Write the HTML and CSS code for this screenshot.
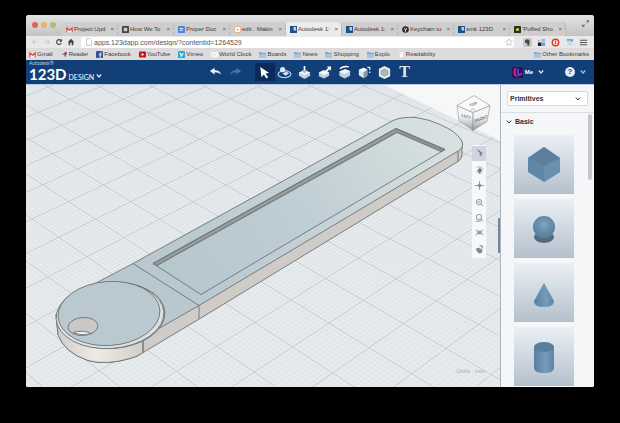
FILE: index.html
```html
<!DOCTYPE html>
<html lang="en">
<head>
<meta charset="utf-8">
<title>Autodesk 123D Design</title>
<link rel="stylesheet" href="styles.css">
</head>
<body>
<div class="window">
  <nav class="tabs" aria-label="Tabs">
    <div class="lights"><i class="light red"></i><i class="light amber"></i><i class="light green"></i></div>
    <button class="tab"><svg class="fav" viewBox="0 0 8 8"><path d="M1 7V2l3 3 3-3v5" fill="#fff" stroke="#d8473b" stroke-width="1.3"/></svg><span>Project Upd</span><b>×</b></button>
    <button class="tab"><svg class="fav" viewBox="0 0 8 8"><rect width="8" height="8" rx="1" fill="#444"/><rect x="2" y="2" width="4" height="4" fill="#ccc"/></svg><span>How We To</span><b>×</b></button>
    <button class="tab"><svg class="fav" viewBox="0 0 8 8"><rect width="8" height="8" rx="1" fill="#4a86e8"/><path d="M2 3h4M2 5h3" stroke="#fff"/></svg><span>Proper Doc</span><b>×</b></button>
    <button class="tab"><svg class="fav" viewBox="0 0 8 8"><rect x=".5" y=".5" width="7" height="7" rx="2" fill="#fff" stroke="#f0a070"/><circle cx="4" cy="4" r="1.5" fill="#f5c09a"/></svg><span>edit : Makin</span><b>×</b></button>
    <button class="tab active"><svg class="fav" viewBox="0 0 8 8"><rect width="8" height="8" fill="#1f4f87"/><path d="M4 1h3v4H4z" fill="#b9d4ec"/></svg><span>Autodesk 1:</span><b>×</b></button>
    <button class="tab"><svg class="fav" viewBox="0 0 8 8"><rect width="8" height="8" fill="#1f4f87"/><path d="M4 1h3v4H4z" fill="#b9d4ec"/></svg><span>Autodesk 1:</span><b>×</b></button>
    <button class="tab"><svg class="fav" viewBox="0 0 8 8"><circle cx="4" cy="4" r="3.8" fill="#2b2b2b"/><path d="M2.5 2.5L4 4.5l1.500-2M4 4v2.500" stroke="#fff" fill="none"/></svg><span>Keychain tu</span><b>×</b></button>
    <button class="tab"><svg class="fav" viewBox="0 0 8 8"><rect width="8" height="8" fill="#1f4f87"/><path d="M4 1h3v4H4z" fill="#b9d4ec"/></svg><span>smk 123D</span><b>×</b></button>
    <button class="tab"><svg class="fav" viewBox="0 0 8 8"><rect width="8" height="8" rx="1" fill="#2c3310"/><circle cx="4" cy="4" r="1.800" fill="#c9d35c"/></svg><span>'Puffed Sho</span><b>×</b></button>
    <svg class="expand" viewBox="0 0 8 8"><path d="M5 .5h2.500V3M7 1L4.800 3.200M3 7.500H.5V5M1 7l2.200-2.200" stroke="#666" fill="none"/></svg>
  </nav>

  <div class="address">
    <svg class="nav-ico" viewBox="0 0 10 10"><path d="M9 5H2M5 2L2 5l3 3" stroke="#cdcdcd" stroke-width="1.500" fill="none"/></svg>
    <svg class="nav-ico" viewBox="0 0 10 10"><path d="M1 5h7M5 2l3 3-3 3" stroke="#cdcdcd" stroke-width="1.500" fill="none"/></svg>
    <svg class="nav-ico" viewBox="0 0 10 10"><path d="M7.800 6.200A3 3 0 1 1 7.300 3" stroke="#444" stroke-width="1.400" fill="none"/><path d="M8.800 1v3.600H5.200z" fill="#444"/></svg>
    <svg class="nav-ico" viewBox="0 0 10 10"><path d="M5 1l4 4H8v4H6V6H4v3H2V5H1z" fill="#444"/></svg>
    <div class="urlbox">
      <svg class="page" viewBox="0 0 8 8"><path d="M1.500.5h3.500l1.500 1.500v5.500h-5z" fill="#fff" stroke="#ccc"/></svg>
      <input class="url" aria-label="Address" value="apps.123dapp.com/design/?contentid=1264529">
      <svg class="page" viewBox="0 0 8 8"><path d="M4 .6l1 2.300 2.500.2-1.900 1.700.6 2.500L4 6 1.800 7.300l.6-2.500L.5 3.100 3 2.900z" fill="#fff" stroke="#bbb" stroke-width=".7"/></svg>
    </div>
    <svg class="ext" viewBox="0 0 10 10"><rect width="10" height="10" rx="1" fill="#c9c9c9"/><path d="M2 3l2-1.500 3 .5.500 3-1 3.500-2-.5.500-2-2.500-.5z" fill="#454a45"/></svg>
    <svg class="ext" viewBox="0 0 10 10"><path d="M1 5h4v4H1z" fill="#222"/><path d="M5 5h4v4H5z" fill="#6d9fd0"/><path d="M5 1h4v3H5z" fill="#8fb8df"/><path d="M1 2l2 2" stroke="#777"/></svg>
    <svg class="ext" viewBox="0 0 10 10"><circle cx="5" cy="5" r="3.600" fill="#f6dcd8" stroke="#d4402f" stroke-width="1.500"/><path d="M5 3v4" stroke="#d4402f"/></svg>
    <svg class="ext" viewBox="0 0 10 10"><path d="M2 2h6v6H3z" fill="#bcdcf0"/><path d="M2 2h6v2" stroke="#4f94c9" stroke-width="1.500" fill="none"/></svg>
    <svg class="ext" viewBox="0 0 10 10"><path d="M1 2.500h8M1 5h8M1 7.500h8" stroke="#555" stroke-width="1.300"/></svg>
  </div>

  <nav class="bookmarks" aria-label="Bookmarks">
    <a href="#"><svg class="bm" viewBox="0 0 8 8"><path d="M1 7V2l3 3 3-3v5" fill="#fff" stroke="#d8473b" stroke-width="1.300"/></svg>Gmail</a>
    <a href="#"><svg class="bm" viewBox="0 0 8 8"><path d="M0 4l7-3-2 6-1.500-3z" fill="#3d63b4"/><path d="M4 1l3 0-2 6z" fill="#c43d4d"/></svg>Reader</a>
    <a href="#"><svg class="bm" viewBox="0 0 8 8"><rect width="8" height="8" rx="1" fill="#2f55a0"/><path d="M6.500 2H5.500Q4.700 2 4.700 3v5M3.300 4.300h2.900" stroke="#fff" fill="none"/></svg>Facebook</a>
    <a href="#"><svg class="bm" viewBox="0 0 8 8"><rect y=".5" width="8" height="7" rx="1" fill="#c8161d"/><path d="M3 2.300v3.400L6 4z" fill="#fff"/></svg>YouTube</a>
    <a href="#"><svg class="bm" viewBox="0 0 8 8"><rect width="8" height="8" rx="1" fill="#27a9d8"/><path d="M1.800 2.500h1l.9 3.500L6 2.500" stroke="#fff" stroke-width="1.200" fill="none"/></svg>Vimeo</a>
    <a href="#"><svg class="bm" viewBox="0 0 8 8"><rect y="1" width="8" height="6" rx="1" fill="#faf7f5"/><path d="M1 5l2-2M4 5l2-2" stroke="#d5b6ae" stroke-width=".7"/></svg>World Clock</a>
    <a href="#"><svg class="bm" viewBox="0 0 8 8"><path d="M0 1h3l1 1h4v5.500H0z" fill="#7fabd0"/><path d="M0 3.500h8v4H0z" fill="#a4c6e2"/></svg>Boards</a>
    <a href="#"><svg class="bm" viewBox="0 0 8 8"><path d="M0 1h3l1 1h4v5.500H0z" fill="#7fabd0"/><path d="M0 3.500h8v4H0z" fill="#a4c6e2"/></svg>News</a>
    <a href="#"><svg class="bm" viewBox="0 0 8 8"><path d="M0 1h3l1 1h4v5.500H0z" fill="#7fabd0"/><path d="M0 3.500h8v4H0z" fill="#a4c6e2"/></svg>Shopping</a>
    <a href="#"><svg class="bm" viewBox="0 0 8 8"><path d="M0 1h3l1 1h4v5.500H0z" fill="#7fabd0"/><path d="M0 3.500h8v4H0z" fill="#a4c6e2"/></svg>Explo</a>
    <a href="#"><svg class="bm" viewBox="0 0 8 8"><path d="M1.500.5h3.500l1.500 1.500v5.500h-5z" fill="#fff" stroke="#d5d0d0" stroke-width=".6"/></svg>Readability</a>
    <a href="#" class="other"><svg class="bm" viewBox="0 0 8 8"><path d="M0 1h3l1 1h4v5.500H0z" fill="#7fabd0"/><path d="M0 3.500h8v4H0z" fill="#a4c6e2"/></svg>Other Bookmarks</a>
  </nav>

  <header class="header">
    <div class="brand">
      <div class="logo"><small>Autodesk®</small><strong>123D</strong></div>
      <span class="product">DESIGN</span>
      <svg class="chev" viewBox="0 0 6 6"><path d="M.8 1.500L3 4l2.200-2.500" stroke="#e4edf7" stroke-width="1.200" fill="none"/></svg>
    </div>
    <div class="tools">
      <button class="tool" aria-label="Undo"><svg viewBox="0 0 16 16"><path d="M2 6.500L7 3v2.200q6 .3 7 4.800-3-2.300-7-2.200V10z" fill="#e8f1fa"/></svg></button>
      <button class="tool" aria-label="Redo" disabled><svg viewBox="0 0 16 16"><path d="M14 6.500L9 3v2.200q-6 .3-7 4.800 3-2.300 7-2.200V10z" fill="#4672a5"/></svg></button>
      <span class="split"></span>
      <button class="tool on" aria-label="Select"><svg viewBox="0 0 16 16"><path d="M3.500 2l9.500 6.500-4 .5 3 4-2 1.300-2.700-4.200L4.800 13z" fill="#fff"/></svg></button>
      <button class="tool" aria-label="Primitives"><svg viewBox="0 0 16 16"><ellipse cx="8" cy="9.800" rx="6.800" ry="3.700" fill="none" stroke="#a9cbe8" stroke-width="1.300"/><circle cx="6" cy="5" r="2.800" fill="#d7e8f5"/><path d="M6 9l4-2 3 2-4 2.500z" fill="#d0e2f0"/></svg></button>
      <button class="tool" aria-label="Sketch"><svg viewBox="0 0 16 16"><path d="M2 8l6-2.500L14 8v3.500L8 15l-6-3.500z" fill="#c3d0dc"/><path d="M2 8l6-2.500L14 8l-6 3z" fill="#f4f7fa"/><path d="M8 1v6" stroke="#fff" stroke-width="1.800"/><path d="M5 5.500h6L8 9z" fill="#9fb4c8"/></svg></button>
      <button class="tool" aria-label="Construct"><svg viewBox="0 0 16 16"><path d="M2 8l5-2.500L13 8v3.500L7.500 14.500 2 12z" fill="#c3d0dc"/><path d="M2 8l5-2.500L13 8l-5.500 3z" fill="#f4f7fa"/><path d="M8 8.500L13 3.500" stroke="#fff" stroke-width="2"/><path d="M10.500 1.500h4.500V6z" fill="#fff"/></svg></button>
      <button class="tool" aria-label="Modify"><svg viewBox="0 0 16 16"><path d="M2.500 7l6-2.500L14 6.500v5l-6 3-5.500-3z" fill="#c3d0dc"/><path d="M2.500 7l6-2.500L14 6.500 8 9.500z" fill="#f4f7fa"/><path d="M3 4Q7 .8 12.500 2" stroke="#fff" stroke-width="1.500" fill="none"/></svg></button>
      <button class="tool" aria-label="Pattern"><svg viewBox="0 0 16 16"><path d="M2 5l5-2 4 2v6.500l-4 2.500-5-3z" fill="#dfe7ed"/><path d="M2 5l5-2 4 2-4 2.500z" fill="#fff"/><path d="M7 7.500l4-2.500v6.500L7 14z" fill="#8598aa"/><path d="M11 2.500h2.500v2.500M13.500 7v1.500" stroke="#dde9f4" stroke-width="1.500" fill="none"/></svg></button>
      <button class="tool" aria-label="Group"><svg viewBox="0 0 16 16"><path d="M8 1l6 3v8l-6 3-6-3V4z" fill="#e3ebf1"/><path d="M8 4.500l3.500 1.800v3.600L8 11.800 4.500 9.900V6.300z" fill="#a9bdb0" stroke="#8a9c94"/></svg></button>
      <button class="tool letter" aria-label="Text">T</button>
    </div>
    <div class="account">
      <div class="user">
        <svg class="avatar" viewBox="0 0 12 12"><rect width="12" height="12" rx="2" fill="#28145c"/><path d="M3 1Q0 5 3 10l4 1Q2 7 5 1z" fill="#d52277"/><path d="M7 2q-2 4 1 7l3-2" stroke="#7d3ce0" stroke-width="1.700" fill="none"/></svg>
        <span class="me">Me</span>
      </div>
      <svg class="chev" viewBox="0 0 6 6"><path d="M.8 1.500L3 4l2.200-2.500" stroke="#d6e8fa" stroke-width="1.200" fill="none"/></svg>
      <button class="help" aria-label="Help">?</button>
      <svg class="chev" viewBox="0 0 6 6"><path d="M.8 1.500L3 4l2.200-2.500" stroke="#9cc8f2" stroke-width="1.200" fill="none"/></svg>
    </div>
  </header>

  <main class="work">
    <section class="stage">
      <svg class="scene" viewBox="26 84 474 303" preserveAspectRatio="xMidYMid slice" role="img" aria-label="Key fob model">
        <defs>
          <clipPath id="plane"><path d="M26 84H383L500 140V387H26z"/></clipPath>
          <linearGradient id="top" gradientUnits="userSpaceOnUse" x1="180" y1="290" x2="440" y2="125"><stop offset="0" stop-color="#b8c8ce"/><stop offset=".5" stop-color="#c5d2d8"/><stop offset="1" stop-color="#d7e1e0"/></linearGradient>
          <linearGradient id="floor" gradientUnits="userSpaceOnUse" x1="180" y1="290" x2="420" y2="135"><stop offset="0" stop-color="#b6c7ce"/><stop offset=".5" stop-color="#bfcdd5"/><stop offset="1" stop-color="#d4dedd"/></linearGradient>
          <linearGradient id="rim"><stop offset="0" stop-color="#cfcdc8"/><stop offset=".45" stop-color="#eeebe5"/><stop offset="1" stop-color="#d2cfc9"/></linearGradient>
          <linearGradient id="cubeL" x1="0" y1="0" x2="0" y2="1"><stop offset=".45" stop-color="#f3f4f5"/><stop offset="1" stop-color="#95999d"/></linearGradient>
        </defs>
        <path d="M26 84H500V387H26z" fill="#f8f7f8"/>
        <path d="M26 84H383L500 140V387H26z" fill="#e7ebee"/>
        <g clip-path="url(#plane)" fill="none"><path id="minor" stroke="#c3cbd1" stroke-width=".5" opacity=".35"/><path id="major" stroke="#c2c8cc" stroke-width=".9"/></g>
        <g stroke="#6d7375" stroke-width=".9" stroke-linejoin="round">
          <path d="M56 314L58 334Q64 352 88 360Q106 365 130 358Q138 356 143 352L200 318L458 161Q462 158 462 154V143L300 200L143 300z" fill="#cfccc7"/>
          <path d="M56 314L58 334Q64 352 88 360Q106 365 130 358Q138 356 143 352V330z" fill="url(#rim)"/>
          <path d="M80 291L97 282L133 263L393 120Q402 116 416 117Q430 119 440 124Q456 131 461 139Q465 146 459 150L199 305L143 337L110 340z" fill="url(#top)"/>
          <path d="M133 263L199 305V318M143 337V352M458 151V161" fill="none"/>
          <ellipse cx="112" cy="315" rx="53" ry="33" transform="rotate(-4 112 315)" fill="#bccace"/>
          <ellipse cx="110" cy="315" rx="54" ry="33" transform="rotate(-4 110 315)" fill="#dce2e3"/>
          <ellipse cx="109" cy="313" rx="51" ry="32" transform="rotate(-4 109 313)" fill="#b9c9cf"/>
          <ellipse cx="83" cy="326" rx="15" ry="9" transform="rotate(-4 83 326)" fill="#c9c8c4"/>
          <path d="M73 332Q83 329 91 333Q83 336 73 332" fill="#edf0f0"/>
          <path d="M153 263L396 128L445 149L201 294z" fill="url(#floor)"/>
          <path d="M153 263L396 128L445 149L441 151L397 132L157 265z" fill="#8b9394"/>
          <path d="M155 264L396 130" fill="none" stroke="#a7afb2" stroke-width=".7"/>
        </g>
        <g stroke="#8c9195" stroke-width=".6" stroke-linejoin="round">
          <path d="M457 105L473 112V130L459 120z" fill="url(#cubeL)"/>
          <path d="M490 105L473 112V130L487 121z" fill="url(#cubeL)"/>
          <path d="M457 105L474 95L490 105L473 112z" fill="#fafafa"/>
          <circle cx="473" cy="110" r="2" fill="#e8e8e8" stroke="#bbb"/>
        </g>
        <g class="cube-text"><text x="469" y="105" transform="rotate(-18 473 103)">TOP</text><text x="461" y="117" transform="rotate(18 465 116)">LEFT</text><text x="474" y="120" transform="rotate(-22 480 118)">FRONT</text></g>
      </svg>
      <div class="view-tools">
        <button class="on" aria-label="Select"><svg viewBox="0 0 12 12"><path d="M4 2l4.500 4-2 .3L8 9" fill="none" stroke="#6c7482" stroke-width="1.200"/></svg></button>
        <span class="gap"></span>
        <button aria-label="Orbit"><svg viewBox="0 0 12 12"><path d="M3 3Q8 0 10 5M9 8Q5 11 3 7" fill="none" stroke="#aaa" /><path d="M6.500 3L9 6 6 9 3.500 6z" fill="#777"/></svg></button>
        <button aria-label="Pan"><svg viewBox="0 0 12 12"><path d="M6 1v10M1 6h10" stroke="#999"/><path d="M6 3.500L8.500 6 6 8.500 3.500 6z" fill="#888"/></svg></button>
        <span class="gap"></span>
        <button aria-label="Zoom"><svg viewBox="0 0 12 12"><circle cx="5.500" cy="5.500" r="3" fill="#eee" stroke="#999"/><path d="M7.500 7.500L10 10M4 5.500h3" stroke="#888"/></svg></button>
        <button aria-label="Zoom window"><svg viewBox="0 0 12 12"><circle cx="5.500" cy="5.500" r="3" fill="#eee" stroke="#999"/><path d="M7.500 7.500L10 10M2 10h6" stroke="#888"/></svg></button>
        <button aria-label="Fit"><svg viewBox="0 0 12 12"><path d="M2 3l3 2.500L2 9M10 3L7 5.500 10 9" fill="none" stroke="#888"/><path d="M4 4h4v4H4z" fill="#999"/></svg></button>
        <span class="gap"></span>
        <button aria-label="Visibility"><svg viewBox="0 0 12 12"><path d="M2 5l3-1 4 2v3l-3 1.500L3 8z" fill="#888"/><path d="M6 2h3v3" fill="none" stroke="#777"/></svg></button>
      </div>
      <div class="units">Units : mm</div>
      <div class="handle"></div>
    </section>

    <aside class="side">
      <div class="pick">
        <select aria-label="Category"><option>Primitives</option></select>
        <svg class="chev" viewBox="0 0 6 6"><path d="M.8 1.500L3 4l2.200-2.500" stroke="#333" fill="none"/></svg>
      </div>
      <div class="list">
        <h2><svg class="chev" viewBox="0 0 6 6"><path d="M.8 1.500L3 4l2.200-2.500" stroke="#333" fill="none"/></svg>Basic</h2>
        <button class="tile" aria-label="Box"><svg viewBox="0 0 60 59"><path d="M30 12L46 23V37L30 47 14 37V23z" fill="#5f87a8"/><path d="M30 12L46 23 30 31 14 23z" fill="#5b7f9d"/><path d="M30 31L46 23V37L30 47z" fill="#6890b0"/></svg></button>
        <button class="tile" aria-label="Sphere"><svg viewBox="0 0 60 59"><defs><radialGradient id="ball" cy=".4"><stop offset="0" stop-color="#7fa3c0"/><stop offset="1" stop-color="#5b83a3"/></radialGradient></defs><ellipse cx="30" cy="38" rx="10" ry="6" fill="#566b7c"/><circle cx="30" cy="28" r="11" fill="url(#ball)"/></svg></button>
        <button class="tile" aria-label="Cone"><svg viewBox="0 0 60 59"><defs><linearGradient id="round"><stop offset="0" stop-color="#597f9e"/><stop offset=".6" stop-color="#759cbb"/><stop offset="1" stop-color="#5d84a4"/></linearGradient></defs><path d="M30 20L40 38Q40 44 30 44T20 38z" fill="url(#round)"/></svg></button>
        <button class="tile" aria-label="Cylinder"><svg viewBox="0 0 60 59"><path d="M20 19V41Q20 46 30 46T40 41V19z" fill="url(#round)"/><ellipse cx="30" cy="20" rx="10" ry="5" fill="#577f9f"/></svg></button>
      </div>
      <div class="thumb"></div>
    </aside>
  </main>
</div>
<script src="grid.js"></script>
</body>
</html>
```

FILE: styles.css
```css
* { box-sizing: border-box; }
html, body { height: 100%; margin: 0; }
body {
  background: #000;
  padding: 15px 26px 36px;
  font: 6px/8px "Liberation Sans", Arial, sans-serif;
  color: #3c3c3c;
}
button, input, select { font: inherit; color: inherit; border: 0; background: none; padding: 0; margin: 0; }
a { color: inherit; text-decoration: none; }
svg { display: block; flex: none; }

.window { height: 100%; display: flex; flex-direction: column; overflow: hidden; border-radius: 3px 3px 2px 2px; background: #f4f5f7; }

.tabs { height: 21px; flex: none; display: flex; align-items: flex-end; padding: 0 5px 0 6px; background: linear-gradient(#e3e3e3, #c4c3c3); }
.lights { display: flex; gap: 3px; width: 30px; padding-bottom: 8px; }
.light { width: 6px; height: 6px; border-radius: 50%; }
.red { background: #e2625a; }
.amber { background: #e9b25c; }
.green { background: #a5c178; }
.tab { flex: 0 1 56px; min-width: 0; height: 14px; display: flex; align-items: center; gap: 1px; padding: 0 3px 0 4px; border-right: 1px solid #bebdbd; border-radius: 3px 4px 0 0; background: #cfcdcd; }
.tab span { flex: 1; white-space: nowrap; text-align: left; }
.tab b { color: #777; font-weight: bold; }
.tab.active { background: #ecebeb; }
.fav { width: 7px; height: 7px; }
.expand { width: 7px; height: 7px; margin: 0 0 9px auto; }

.address { height: 12px; flex: none; display: flex; align-items: center; gap: 4px; padding: 0 6px 0 5px; background: #e9e8e8; }
.nav-ico { width: 8px; height: 8px; }
.urlbox { flex: 1; display: flex; align-items: center; height: 11px; margin: 0 4px 0 2px; padding: 0 1px 0 4px; background: #fff; border-radius: 2px; }
.page { width: 8px; height: 8px; }
.url { flex: 1; min-width: 0; height: 11px; font-size: 7px; color: #555; padding: 0 1px; outline: 0; }
.ext { width: 9px; height: 9px; margin-left: 1px; }

.bookmarks { height: 12px; flex: none; display: flex; align-items: center; gap: 8px; padding: 0 5px 0 3px; background: #dddbdb; }
.bookmarks a { display: flex; align-items: center; gap: 1px; white-space: nowrap; }
.bookmarks .other { margin-left: auto; }
.bm { width: 7px; height: 7px; }

.header { height: 24px; flex: none; display: grid; grid-template-columns: 1fr auto 1fr; align-items: center; padding: 0 3px; background: #123f78; color: #fff; font-family: Lato, sans-serif; }
.brand { display: flex; align-items: flex-end; gap: 2px; height: 22px; }
.logo { display: flex; flex-direction: column; }
.logo small { font-size: 5px; line-height: 5px; color: #b9cce2; }
.logo strong { font-size: 15px; line-height: 17px; font-weight: 700; }
.product { font-size: 7px; line-height: 12px; }
.chev { width: 6px; height: 6px; }
.brand .chev { margin-bottom: 4px; }
.tools { display: flex; align-items: center; }
.tool { width: 20px; height: 18px; display: grid; place-items: center; }
.tool svg { width: 15px; height: 15px; }
.tool.on { background: #0b2c5a; }
.split { width: 9px; }
.letter { font: bold 16px/18px "Liberation Serif", serif; color: #dbe9f6; }
.account { display: flex; align-items: center; justify-content: flex-end; gap: 5px; padding-right: 5px; }
.user { display: flex; align-items: center; gap: 2px; }
.avatar { width: 11px; height: 11px; }
.me { font: bold 6px/10px "Liberation Sans", sans-serif; }
.help { width: 10px; height: 10px; margin-left: 16px; border-radius: 50%; background: #e5edf5; color: #27466e; font: bold 8px/10px "Liberation Sans", sans-serif; }

.work { flex: 1; min-height: 0; display: flex; border-top: 1px solid #b4cae6; }
.stage { flex: 1; min-width: 0; position: relative; overflow: hidden; border-right: 1px solid #adb4c0; }
.scene { width: 100%; height: 100%; }
.cube-text { font-size: 4px; font-weight: bold; fill: #777; }
.view-tools { position: absolute; top: 60px; right: 14px; width: 14px; display: flex; flex-direction: column; padding: 1px 0; background: #f6f8fa; }
.view-tools button { height: 15px; display: grid; place-items: center; }
.view-tools button svg { width: 11px; height: 11px; }
.view-tools .on { background: #cdd3e0; }
.gap { height: 2px; }
.units { position: absolute; right: 15px; bottom: 12px; color: #a5aaae; }
.handle { position: absolute; right: 0; top: 133px; width: 2px; height: 35px; background: #74869b; }

.side { width: 93px; flex: none; position: relative; overflow: hidden; background: #f5f6f8; }
.pick { position: relative; height: 28px; padding: 6px 6px 0; border-bottom: 1px solid #dcdee2; }
.pick select { appearance: none; width: 100%; height: 15px; padding: 0 2px; border: 1px solid #d5d8dd; border-radius: 2px; background: #fff; font-size: 7px; font-weight: bold; color: #333; }
.pick .chev { position: absolute; right: 13px; top: 11px; }
.list { display: flex; flex-direction: column; gap: 5px; padding: 0 20px 0 5px; }
.list h2 { display: flex; align-items: center; gap: 3px; height: 17px; margin: 0; font-size: 7px; font-weight: bold; color: #333; }
.tile { height: 59px; flex: none; margin-left: 8px; display: grid; place-items: center; background: linear-gradient(#ebf0f5, #b3c0cc); }
.tile svg { width: 60px; height: 59px; }
.thumb { position: absolute; right: 2px; top: 29px; width: 4px; height: 66px; border-radius: 2px; background: #c3c5c9; }
```

FILE: grid.js
```js
// Ground grid in perspective: cell corners (i, j) mapped to scene points.
const anchors = [
  [1, -8, 52.7, 153.3],
  [1, 3, 411.7, 373.3],
  [5, 2, 496.7, 258.3],
  [5, -6, 229.3, 124.7],
];

function solve(rows) {
  const n = rows.length;
  for (let c = 0; c < n; c++) {
    let p = c;
    for (let r = c + 1; r < n; r++) if (Math.abs(rows[r][c]) > Math.abs(rows[p][c])) p = r;
    [rows[c], rows[p]] = [rows[p], rows[c]];
    for (let r = 0; r < n; r++) {
      if (r === c) continue;
      const f = rows[r][c] / rows[c][c];
      for (let k = c; k <= n; k++) rows[r][k] -= f * rows[c][k];
    }
  }
  return rows.map((row, k) => row[n] / row[k]);
}

const h = solve(anchors.flatMap(([i, j, x, y]) => [
  [i, j, 1, 0, 0, 0, -i * x, -j * x, x],
  [0, 0, 0, i, j, 1, -i * y, -j * y, y],
]));

function point(i, j) {
  const w = h[6] * i + h[7] * j + 1;
  return [(h[0] * i + h[1] * j + h[2]) / w, (h[3] * i + h[4] * j + h[5]) / w];
}

// Path across the whole scene through two projected points.
function line(p, q) {
  const slope = (q[1] - p[1]) / (q[0] - p[0]);
  const at = (x) => (p[1] + slope * (x - p[0])).toFixed(1);
  return `M26 ${at(26)}L500 ${at(500)}`;
}

let major = "";
let minor = "";
for (let k = -160; k <= 160; k++) {
  const t = k / 10;
  const d = (t > -6 && t < 13 ? line(point(t, -3), point(t, 0)) : "") +
            (t > -15 && t < 8 ? line(point(2, t), point(4, t)) : "");
  if (k % 10 === 0) major += d; else minor += d;
}
document.getElementById("major").setAttribute("d", major);
document.getElementById("minor").setAttribute("d", minor);
```
